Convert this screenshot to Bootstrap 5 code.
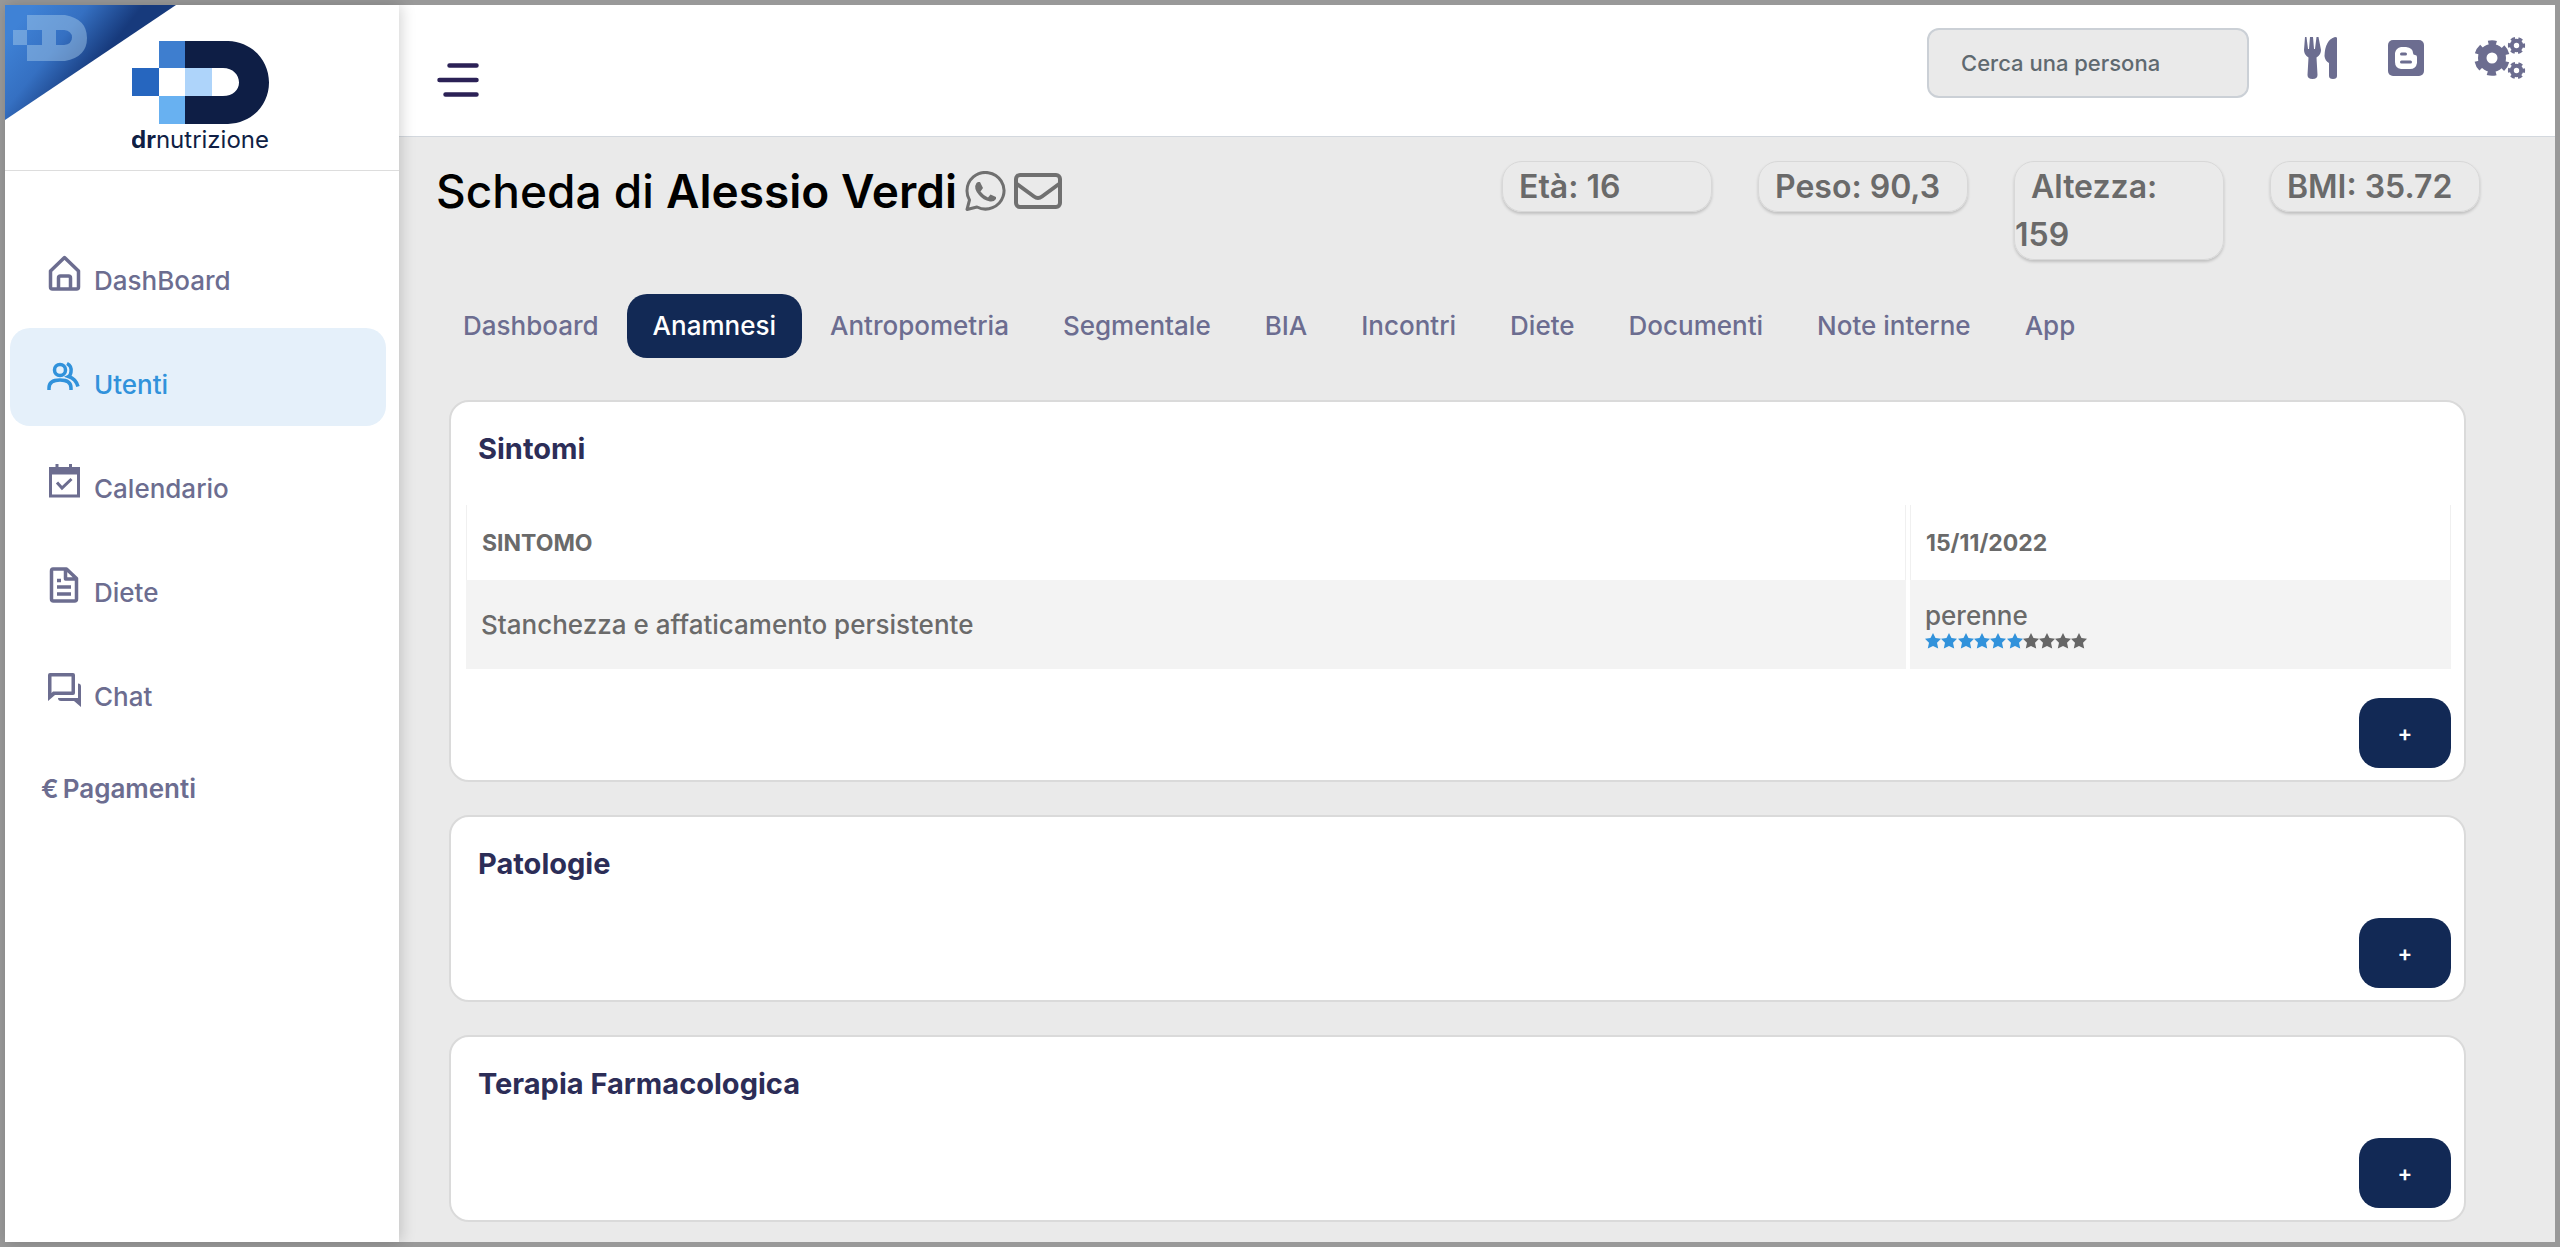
<!DOCTYPE html>
<html lang="it">
<head>
<meta charset="utf-8">
<meta name="viewport" content="width=device-width, initial-scale=1">
<title>Scheda di Alessio Verdi - drnutrizione</title>
<link href="https://cdn.jsdelivr.net/npm/bootstrap@5.3.0/dist/css/bootstrap.min.css" rel="stylesheet">
<style>
:root { --ink: #6c6d90; --navy: #122955; --ground: #eaeaea; --grey: #6a6a6a; --sky: #3192db; }
body { font-family: Inter, "Liberation Sans", sans-serif; font-size: 26px; line-height: 36px; font-weight: 500; color: var(--grey); background: var(--ground); }
a { text-decoration: none; }
.app-shell { border: 5px solid #999; min-height: 100vh; }
.side { width: 394px; z-index: 2; box-shadow: 2px 0 14px rgba(0,0,0,.18); }
.brand { height: 166px; border-bottom: 1px solid #ddd; padding-top: 36px; }
.ribbon { left: 0; top: 0; width: 171px; height: 115px; }
.brand-name { fill: #101f45; font-family: Inter, "Liberation Sans", sans-serif; font-size: 24px; }
.side-nav { padding: 53px 13px 0 5px; gap: 6px; }
.side-nav .nav-link { height: 98px; padding: 18px 0 0 34px; gap: 10px; border-radius: 20px; color: var(--ink); }
.side-nav .nav-link svg { flex: none; margin-top: 11px; }
.side-nav .nav-link span { margin-top: 21px; }
.side-nav .nav-link.active { background: #e5f0fa; color: var(--sky); }
.side-nav .nav-link.pay { padding: 6px 0 0 31px; gap: 4px; font-weight: 600; }
.topbar { height: 132px; border-bottom: 1px solid #d3d8de; padding: 23px 29px 0 38px; }
.menu-btn { margin-top: 35px; }
.search-box { width: 322px; height: 70px; border: 2px solid #cbd0d6; border-radius: 12px; background: var(--ground); font-size: 22px; font-weight: 500; padding: 0 32px; margin-right: 54px; }
.search-box::placeholder { color: #5f6970; opacity: 1; }
.top-icons { margin-top: 9px; gap: 50px; color: var(--ink); }
.page { padding: 24px 89px 18px 50px; }
.head { margin: 0 -14px 0 -13px; min-height: 98px; }
.head h1 { font-size: 46px; line-height: 60px; font-weight: 500; color: #000; gap: 8px; }
.head h1 strong { font-weight: 600; }
.stats { gap: 46px; }
.stat { width: 210px; padding: 1px 12px 0 0; border: 1px solid #d8d8d8; border-radius: 20px; box-shadow: 0 2px 3px rgba(0,0,0,.18); font-size: 32px; line-height: 48px; font-weight: 600; text-indent: 16px; }
.tabs { margin: 34px 0 0 -12px; gap: 2px; }
.tabs .nav-link { color: var(--ink); padding: 14px 26px; border-radius: 20px; }
.tabs .nav-link.active { background: var(--navy); color: #fff; }
.panels { margin-top: 42px; gap: 33px; }
.panel { border: 2px solid #dadada; border-radius: 20px; padding: 29px 13px 12px 15px; }
.panel h2 { font-size: 29px; line-height: 36px; font-weight: 700; color: #2c2d57; margin: 0 0 36px 12px; }
.panel.has-data h2 { margin-bottom: 38px; }
.add-btn { width: 92px; height: 70px; border-radius: 20px; background: var(--navy); color: #fff; font-size: 22px; font-weight: 600; }
.add-btn:hover { background: #1d3a72; color: #fff; }
.grid-table { border-collapse: separate; border-spacing: 0; width: 100%; margin: 0 0 29px; }
.grid-table th { height: 75px; font-size: 23px; font-weight: 700; padding: 0 15px; border: solid #f0f0f0; border-width: 0 1px; border-bottom: 0; }
.grid-table td { padding: 0 15px; background: #f3f3f3; vertical-align: middle; }
.grid-table tbody tr { height: 89px; }
.grid-table .c2 { width: 541px; }
.grid-table .split { width: 4px; padding: 0; background: none; border: 0; }
.stars { line-height: 16px; padding-top: 2px; }
.stars svg { display: block; }
.perenne { line-height: 30px; }
</style>
</head>
<body>
<div class="app-shell d-flex">
  <aside class="side bg-white position-relative flex-shrink-0">
    <svg class="ribbon position-absolute" viewBox="0 0 171 115" aria-hidden="true">
      <defs><linearGradient id="rib" gradientUnits="userSpaceOnUse" x1="20" y1="10" x2="88" y2="64"><stop offset="0" stop-color="#3f82d6"/><stop offset=".5" stop-color="#3570c2"/><stop offset="1" stop-color="#173a7c"/></linearGradient></defs>
      <path d="M0 0H171L0 115Z" fill="url(#rib)"/>
      <g fill="#9fc6e8" fill-opacity=".5"><path d="M8 25h14v15H8zM22 10h15v15H22zM22 40h15v16H22z"/><path fill-rule="evenodd" d="M37 10H60Q82 14 82 33T60 56H37ZM51 25V40H59Q67 39 67 32.500T59 25Z"/></g>
    </svg>
    <div class="brand text-center">
      <a href="#" aria-label="drnutrizione"><svg width="140" height="112" viewBox="0 0 140 112">
        <path fill="#2666bf" d="M0 27h27v28H0z"/><path fill="#3e7ecf" d="M27 0h27v27H27z"/><path fill="#68b1f1" d="M27 55h27v28H27z"/><path fill="#aed4fa" d="M53 27h27v28H53z"/>
        <path fill="#0e1e45" fill-rule="evenodd" d="M53 0H96C121 1 137 20 137 41.500S121 82 96 83H53V55H91C101 55 107 49 107 41.500S101 27 91 27H53Z"/>
        <text class="brand-name" x="-1" y="107"><tspan font-weight="700">dr</tspan><tspan font-weight="400">nutrizione</tspan></text>
      </svg></a>
    </div>
    <nav class="side-nav nav flex-column" aria-label="Menu principale">
      <a class="nav-link d-flex align-items-start" href="#"><svg width="40" height="40" viewBox="0 0 40 40" fill="none" stroke="currentColor" stroke-width="3.500" stroke-linejoin="round"><path d="M6.500 18 20.500 4.500 34.500 18V34Q34.500 36 32.500 36H8.500Q6.500 36 6.500 34ZM14.500 36V25Q14.500 23 16.500 23H24.500Q26.500 23 26.500 25V36"/></svg><span>DashBoard</span></a>
      <a class="nav-link d-flex align-items-start active" aria-current="page" href="#"><svg width="40" height="40" viewBox="0 0 40 40" fill="none" stroke="currentColor" stroke-width="3.500"><circle cx="16" cy="13" r="5.500"/><path d="M5 33V31Q5 23 16 23T27 31V33M23 6.500Q28 9 27 15Q26.500 18.500 24.500 19.500Q32 22 34 29.500"/></svg><span>Utenti</span></a>
      <a class="nav-link d-flex align-items-start" href="#"><svg width="40" height="40" viewBox="0 0 40 40" fill="none" stroke="currentColor" stroke-width="3"><path d="M6.500 7.500H34.500V35H6.500ZM13 3V9M26.500 3V9M13 21.500 18 27 27.500 18" stroke-width="3"/><path d="M6 11H35" stroke-width="5"/></svg><span>Calendario</span></a>
      <a class="nav-link d-flex align-items-start" href="#"><svg width="40" height="40" viewBox="0 0 40 40" fill="none" stroke="currentColor" stroke-width="3.500" stroke-linejoin="round"><path d="M9 4H22.500L32.500 13.500V34Q32.500 36 30.500 36H9.500Q7.500 36 7.500 34V6Q7.500 4 9 4ZM21.500 4V14H32M13 15.500H17M13 22H27M13 29H27"/></svg><span>Diete</span></a>
      <a class="nav-link d-flex align-items-start" href="#"><svg width="40" height="40" viewBox="0 0 40 40" fill="currentColor"><path fill-rule="evenodd" d="M6 4H29Q31 4 31 6V24Q31 26 29 26H11L4 32V6Q4 4 6 4ZM7.500 7.500V24L9 22.500H27.500V7.500Z"/><path d="M34 14.500Q37 14.500 37 17.500V38L30 32H17Q14 32 14 29H34Z"/></svg><span>Chat</span></a>
      <a class="nav-link d-flex align-items-start pay" href="#"><span>€</span><span>Pagamenti</span></a>
    </nav>
  </aside>

  <div class="flex-grow-1 d-flex flex-column">
    <header class="topbar bg-white d-flex align-items-start">
      <button class="menu-btn btn p-0 border-0 me-auto d-flex" type="button" aria-label="Apri menu"><svg width="42" height="34" viewBox="0 0 42 34" stroke="#2b2156" stroke-width="4.500" stroke-linecap="round"><path d="M12.500 2.500H39.500M2.500 17H39.500M8.500 31.500H39.500"/></svg></button>
      <input class="search-box" type="search" placeholder="Cerca una persona" aria-label="Cerca una persona">
      <div class="top-icons d-flex align-items-center">
        <a href="#" class="text-reset d-flex" aria-label="Diete"><svg width="35" height="42" viewBox="0 0 35 42" fill="currentColor"><path d="M2 0H3.500L5 12H6L7 0H10L11 12H12L13.500 0H15.500L18 13Q18 18 13.500 20.500L14.500 38Q14.500 42 9.500 42T4.500 38L5.500 20.500Q1 18 1 13ZM34 1V39Q34 42 30 42T26 39V26Q22 24 21.500 19Q22 3 32 0Q34 0 34 1Z"/></svg></a>
        <a href="#" class="text-reset d-flex" aria-label="Blog"><svg width="36" height="36" viewBox="0 0 36 36"><rect width="36" height="36" rx="5" fill="currentColor"/><path fill="#fff" d="M13 7H18Q25 8 25 13Q25 15 27 15Q29 15 29 17V23Q28 29 22 29H13Q7 28 7 22V13Q8 8 13 7Z"/><path d="M13.500 14H17.500M13.500 22H22.500" stroke="currentColor" stroke-width="3" stroke-linecap="round"/></svg></a>
        <a href="#" class="text-reset d-flex" aria-label="Impostazioni"><svg width="52" height="42" viewBox="0 0 52 42" fill="none" stroke="currentColor"><circle cx="18" cy="21" r="9.750" stroke-width="8.500"/><circle cx="18" cy="21" r="15" stroke-width="5.500" stroke-dasharray="8.500 7.208" stroke-dashoffset="4.250" transform="rotate(-90 18 21)"/><circle cx="42.500" cy="8.500" r="4.700" stroke-width="4"/><circle cx="42.500" cy="8.500" r="6.800" stroke-width="3.600" stroke-dasharray="4 3.121" stroke-dashoffset="2"/><circle cx="42.500" cy="33.500" r="4.700" stroke-width="4"/><circle cx="42.500" cy="33.500" r="6.800" stroke-width="3.600" stroke-dasharray="4 3.121" stroke-dashoffset="2"/></svg></a>
      </div>
    </header>

    <main class="page">
      <div class="head d-flex justify-content-between align-items-start">
        <h1 class="d-flex align-items-center mb-0"><span>Scheda di <strong>Alessio Verdi</strong></span>
          <a href="#" class="d-flex" aria-label="WhatsApp"><svg width="41" height="41" viewBox="0 0 41 41" fill="none" stroke="#707070" stroke-width="3"><path d="M2 38.500 4.500 29Q2 25 2 20A18.500 18.300 0 1 1 12 36Z" stroke-linejoin="round"/><path fill="#707070" stroke="none" d="M13 11H15L18 17L15.500 20.500Q18 24 23 26.500L25.500 23.500L31 26V28Q29 31 25 30.500Q18 29 14 24Q8 17 11.500 12Z"/></svg></a>
          <a href="#" class="d-flex" aria-label="Email"><svg width="48" height="36" viewBox="0 0 48 36" fill="none" stroke="#707070" stroke-width="4"><rect x="2" y="2" width="44" height="32" rx="4"/><path d="M3 11 20 23.500Q24 26.500 28 23.500L45 11"/></svg></a>
        </h1>
        <div class="stats d-flex align-items-start">
          <div class="stat">Età: 16</div>
          <div class="stat">Peso: 90,3</div>
          <div class="stat">Altezza: 159</div>
          <div class="stat">BMI: 35.72</div>
        </div>
      </div>

      <nav class="tabs nav" aria-label="Sezioni della scheda">
        <a class="nav-link" href="#">Dashboard</a>
        <a class="nav-link active" aria-current="page" href="#">Anamnesi</a>
        <a class="nav-link" href="#">Antropometria</a>
        <a class="nav-link" href="#">Segmentale</a>
        <a class="nav-link" href="#">BIA</a>
        <a class="nav-link" href="#">Incontri</a>
        <a class="nav-link" href="#">Diete</a>
        <a class="nav-link" href="#">Documenti</a>
        <a class="nav-link" href="#">Note interne</a>
        <a class="nav-link" href="#">App</a>
      </nav>

      <div class="panels d-flex flex-column">
        <section class="panel has-data bg-white">
          <h2>Sintomi</h2>
          <table class="grid-table">
            <thead><tr><th scope="col">SINTOMO</th><td class="split"></td><th scope="col" class="c2">15/11/2022</th></tr></thead>
            <tbody><tr><td>Stanchezza e affaticamento persistente</td><td class="split"></td><td class="c2">
              <div class="perenne">perenne</div>
              <div class="stars"><svg width="162" height="16" viewBox="0 0 162 16" role="img" aria-label="6 su 10">
                <defs><path id="st" d="M8 0 10.500 5 16 5.800 12 9.700 13.200 15.500 8 12.900 2.800 15.500 4 9.700 0 5.800 5.500 5Z"/></defs>
                <g fill="#3192db"><use href="#st"/><use href="#st" x="16"/><use href="#st" x="33"/><use href="#st" x="49"/><use href="#st" x="65"/><use href="#st" x="82"/></g>
                <g fill="#666"><use href="#st" x="98"/><use href="#st" x="114"/><use href="#st" x="130"/><use href="#st" x="146"/></g>
              </svg></div>
            </td></tr></tbody>
          </table>
          <div class="d-flex justify-content-end"><button class="add-btn btn border-0" type="button" aria-label="Aggiungi sintomo">+</button></div>
        </section>
        <section class="panel bg-white">
          <h2>Patologie</h2>
          <div class="d-flex justify-content-end"><button class="add-btn btn border-0" type="button" aria-label="Aggiungi patologia">+</button></div>
        </section>
        <section class="panel bg-white">
          <h2>Terapia Farmacologica</h2>
          <div class="d-flex justify-content-end"><button class="add-btn btn border-0" type="button" aria-label="Aggiungi terapia">+</button></div>
        </section>
      </div>
    </main>
  </div>
</div>
<script src="https://cdn.jsdelivr.net/npm/bootstrap@5.3.0/dist/js/bootstrap.bundle.min.js"></script>
</body>
</html>
